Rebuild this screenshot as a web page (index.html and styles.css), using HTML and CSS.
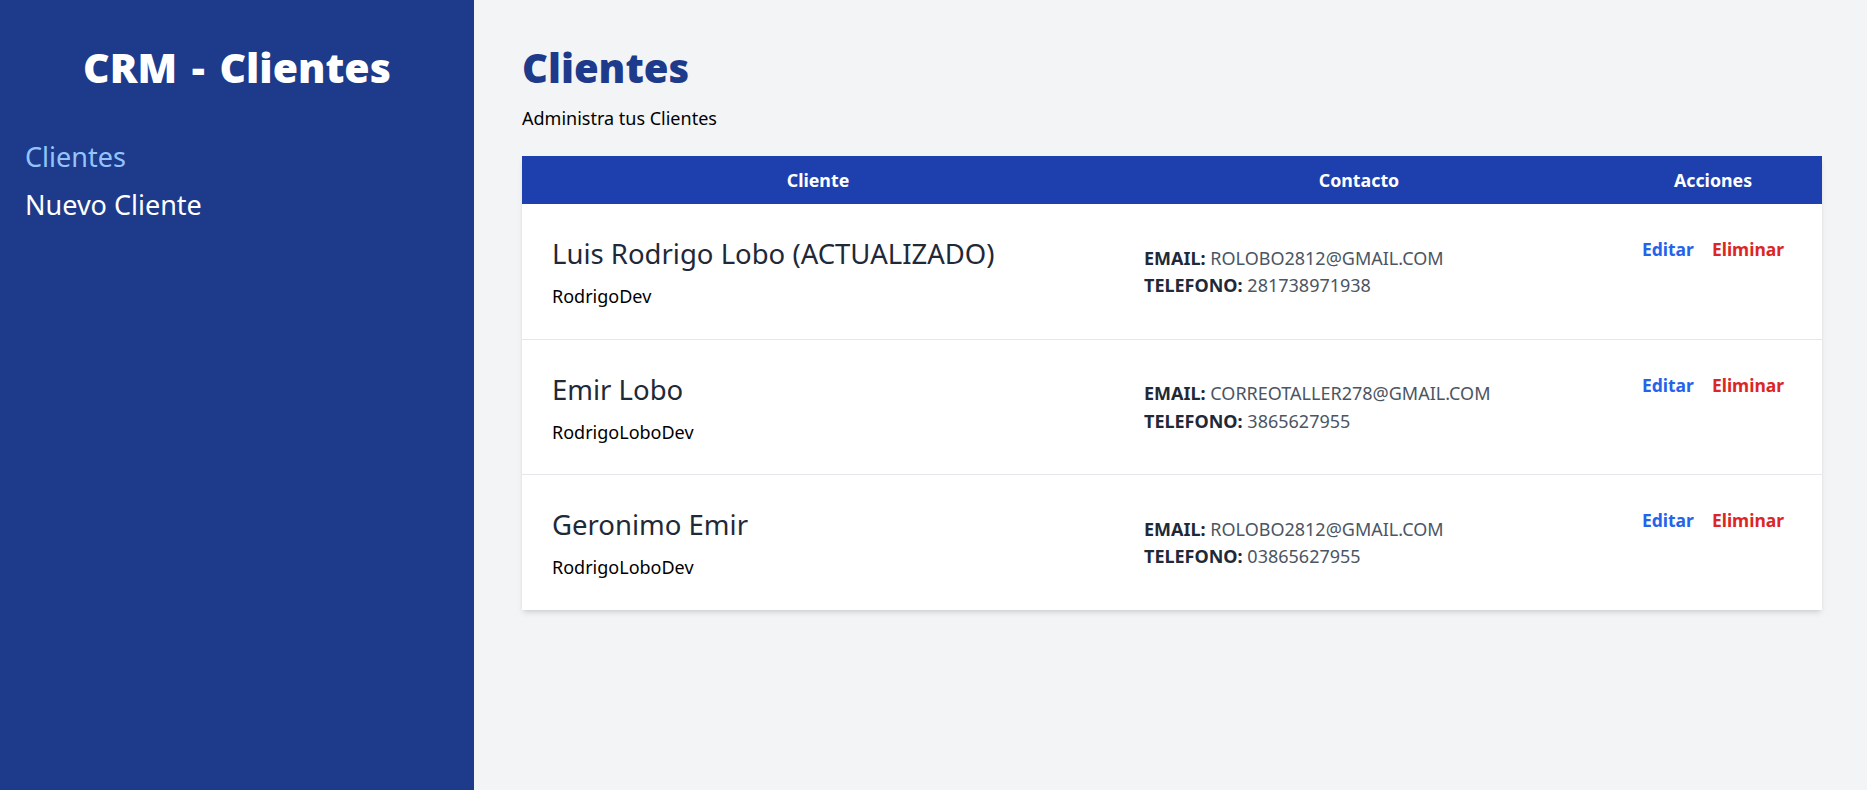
FILE: index.html
```html
<!DOCTYPE html>
<html lang="es">
<head>
<meta charset="utf-8">
<title>CRM - Clientes</title>
<link rel="stylesheet" href="styles.css">
</head>
<body>
<div class="layout">
  <aside class="sidebar">
    <h2 class="brand">CRM - Clientes</h2>
    <nav class="nav">
      <a class="nav-link active" href="#">Clientes</a>
      <a class="nav-link" href="#">Nuevo Cliente</a>
    </nav>
  </aside>
  <main class="main">
    <h1 class="title">Clientes</h1>
    <p class="subtitle">Administra tus Clientes</p>
    <div class="card">
      <div class="thead">
        <div class="th">Cliente</div>
        <div class="th">Contacto</div>
        <div class="th">Acciones</div>
      </div>
      <div class="row">
        <div class="cell client">
          <p class="name">Luis Rodrigo Lobo (ACTUALIZADO)</p>
          <p class="company">RodrigoDev</p>
        </div>
        <div class="cell contact">
          <p><span class="label">EMAIL:</span> ROLOBO2812@GMAIL.COM</p>
          <p><span class="label">TELEFONO:</span> 281738971938</p>
        </div>
        <div class="cell actions">
          <button class="btn edit" type="button">Editar</button>
          <button class="btn delete" type="button">Eliminar</button>
        </div>
      </div>
      <div class="row">
        <div class="cell client">
          <p class="name">Emir Lobo</p>
          <p class="company">RodrigoLoboDev</p>
        </div>
        <div class="cell contact">
          <p><span class="label">EMAIL:</span> CORREOTALLER278@GMAIL.COM</p>
          <p><span class="label">TELEFONO:</span> 3865627955</p>
        </div>
        <div class="cell actions">
          <button class="btn edit" type="button">Editar</button>
          <button class="btn delete" type="button">Eliminar</button>
        </div>
      </div>
      <div class="row">
        <div class="cell client">
          <p class="name">Geronimo Emir</p>
          <p class="company">RodrigoLoboDev</p>
        </div>
        <div class="cell contact">
          <p><span class="label">EMAIL:</span> ROLOBO2812@GMAIL.COM</p>
          <p><span class="label">TELEFONO:</span> 03865627955</p>
        </div>
        <div class="cell actions">
          <button class="btn edit" type="button">Editar</button>
          <button class="btn delete" type="button">Eliminar</button>
        </div>
      </div>
    </div>
  </main>
</div>
</body>
</html>
```
FILE: styles.css
```css
* { box-sizing: border-box; }
html, body { margin: 0; padding: 0; }
body {
  font-family: "Noto Sans", "Open Sans", sans-serif;
  background: #f3f4f6;
  color: #000;
}
p, h1, h2 { margin: 0; }

.layout {
  display: flex;
  min-height: 790px;
}

.sidebar {
  width: 474px;
  flex-shrink: 0;
  background: #1e3a8a;
  padding: 45px 25px;
}
.brand {
  font-size: 41px;
  line-height: 45px;
  font-weight: 900;
  color: #fff;
  text-align: center;
  word-spacing: 4px;
}
.nav {
  display: flex;
  flex-direction: column;
  margin-top: 43px;
}
.nav-link {
  display: block;
  font-size: 27px;
  line-height: 48px;
  color: #fff;
  text-decoration: none;
}
.nav-link.active { color: #93c5fd; }

.main {
  flex: 1;
  padding: 45px 45px 40px 48px;
}
.title {
  font-size: 40px;
  line-height: 45px;
  font-weight: 900;
  color: #1e3a8a;
}
.subtitle {
  font-size: 18px;
  line-height: 27px;
  margin-top: 14.5px;
  color: #000;
}

.card {
  margin-top: 24.5px;
  background: #fff;
  box-shadow: 0 4px 6px -1px rgba(0,0,0,.1), 0 2px 4px -2px rgba(0,0,0,.1);
}
.thead, .row {
  display: grid;
  grid-template-columns: 592px 490px 1fr;
}
.thead { background: #1e40af; }
.th {
  color: #fff;
  font-weight: 700;
  font-size: 17.8px;
  line-height: 48px;
  text-align: center;
}
.row { border-bottom: 1px solid #e5e7eb; }
.row:last-child { border-bottom: 0; }
.cell { padding: 30px 30px 29.5px; }

.name {
  font-size: 27.5px;
  line-height: 40px;
  color: #1f2937;
}
.company {
  font-size: 18px;
  line-height: 25px;
  margin-top: 10px;
  color: #000;
}

.contact {
  align-self: center;
  font-size: 18px;
  line-height: 27.5px;
  color: #4b5563;
  padding-top: 31px;
}
.label {
  font-weight: 700;
  color: #1f2937;
}

.actions {
  display: flex;
  justify-content: center;
  align-items: flex-start;
  gap: 18px;
}
.btn {
  font-family: inherit;
  font-size: 17.5px;
  line-height: 30px;
  font-weight: 700;
  background: none;
  border: 0;
  padding: 0;
  cursor: pointer;
}
.edit { color: #2563eb; }
.delete { color: #dc2626; }
```
